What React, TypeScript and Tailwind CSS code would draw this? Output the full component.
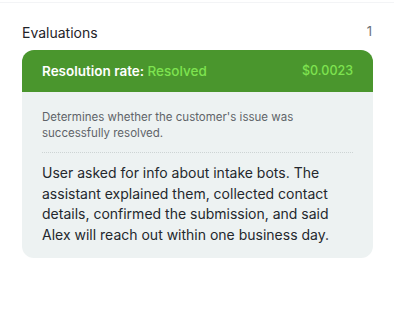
export default function App() {
  return (
    <div className="w-[394px] h-[309px] bg-white" style={{ fontFamily: "Inter, 'Noto Sans', sans-serif" }}>
      <div className="h-[3px] border-b border-gray-100" />
      <div className="px-[22px] pt-[19px]">
        <div className="flex items-center justify-between h-[20px]">
          <span className="text-[14px] text-[#1f2329]">Evaluations</span>
          <span className="text-[13px] text-[#6b7077]">1</span>
        </div>
        <div className="mt-[8px] w-[351px] rounded-[12px] overflow-hidden bg-[#edf2f2]">
          <div className="h-[42px] bg-[#4a962d] flex items-center justify-between px-[20px]">
            <span className="text-[13.5px] font-semibold text-white">
              Resolution rate: <span className="text-[#7ee350] font-medium">Resolved</span>
            </span>
            <span className="text-[12.5px] font-medium text-[#7ee350]">$0.0023</span>
          </div>
          <div className="px-[20px] pt-[17px] pb-[13px]">
            <p className="text-[11.5px] leading-[16px] text-[#5f6469]">
              Determines whether the customer's issue was successfully resolved.
            </p>
            <div className="mt-[11px] border-t border-dotted border-[#cdd4d4]" />
            <p className="mt-[10px] text-[14px] leading-[20.5px] text-[#24282d]">
              User asked for info about intake bots. The assistant explained them, collected contact details, confirmed the submission, and said Alex will reach out within one business day.
            </p>
          </div>
        </div>
      </div>
    </div>
  );
}
